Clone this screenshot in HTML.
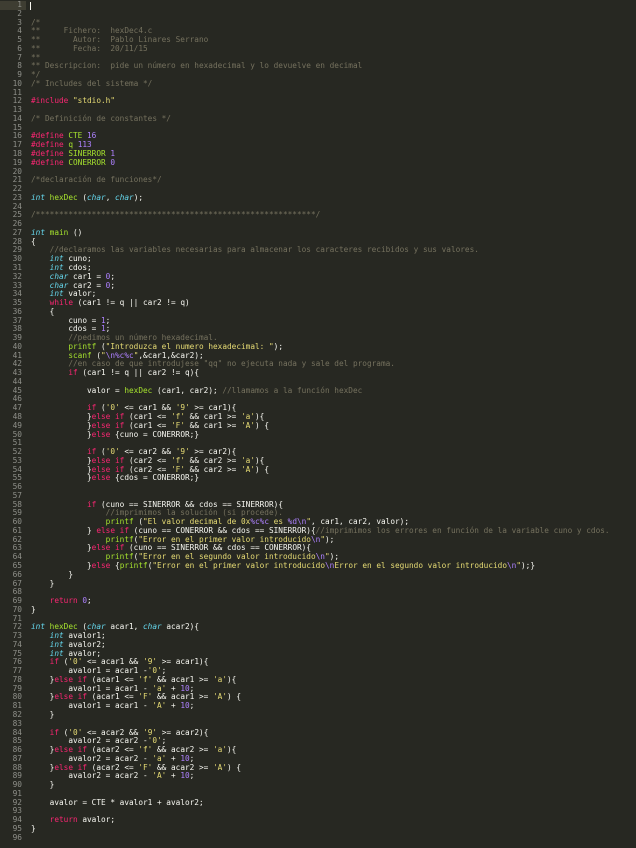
<!DOCTYPE html>
<html><head><meta charset="utf-8"><style>
html,body{margin:0;padding:0;background:#272822;width:636px;height:848px;overflow:hidden}
#g{position:absolute;left:0;top:1px;width:22px;text-align:right;font:7.8px/8.76px "DejaVu Sans Mono","Liberation Mono",monospace;color:#8f908a;white-space:pre}
#c{position:absolute;left:31px;top:1px;margin:0;font:7.75px/8.76px "DejaVu Sans Mono","Liberation Mono",monospace;color:#f8f8f2;white-space:pre}
.hl{position:absolute;left:0;top:1px;width:26px;height:9px;background:#3e3d32}
.cur{position:absolute;left:30px;top:2px;width:1px;height:8px;background:#f8f8f0}
.cm{color:#75715e}.k{color:#f92672}.t{color:#66d9ef;font-style:italic}.f{color:#a6e22e}.s{color:#e6db74}.n{color:#ae81ff}
</style></head><body>
<div class="hl"></div><div class="cur"></div>
<div id="g">1
2
3
4
5
6
7
8
9
10
11
12
13
14
15
16
17
18
19
20
21
22
23
24
25
26
27
28
29
30
31
32
33
34
35
36
37
38
39
40
41
42
43
44
45
46
47
48
49
50
51
52
53
54
55
56
57
58
59
60
61
62
63
64
65
66
67
68
69
70
71
72
73
74
75
76
77
78
79
80
81
82
83
84
85
86
87
88
89
90
91
92
93
94
95
96</div>
<pre id="c">


<span class="cm">/*
**     Fichero:  hexDec4.c
**       Autor:  Pablo Linares Serrano
**       Fecha:  20/11/15
**
** Descripcion:  pide un número en hexadecimal y lo devuelve en decimal
*/
/* Includes del sistema */</span>

<span class="k">#include</span> <span class="s">"stdio.h"</span>

<span class="cm">/* Definición de constantes */</span>

<span class="k">#define</span> <span class="f">CTE</span> <span class="n">16</span>
<span class="k">#define</span> <span class="f">q</span> <span class="n">113</span>
<span class="k">#define</span> <span class="f">SINERROR</span> <span class="n">1</span>
<span class="k">#define</span> <span class="f">CONERROR</span> <span class="n">0</span>

<span class="cm">/*declaración de funciones*/</span>

<span class="t">int</span> <span class="f">hexDec</span> (<span class="t">char</span>, <span class="t">char</span>);

<span class="cm">/************************************************************/</span>

<span class="t">int</span> <span class="f">main</span> ()
{
    <span class="cm">//declaramos las variables necesarias para almacenar los caracteres recibidos y sus valores.</span>
    <span class="t">int</span> cuno;
    <span class="t">int</span> cdos;
    <span class="t">char</span> car1 = <span class="n">0</span>;
    <span class="t">char</span> car2 = <span class="n">0</span>;
    <span class="t">int</span> valor;
    <span class="k">while</span> (car1 != q || car2 != q)
    {
        cuno = <span class="n">1</span>;
        cdos = <span class="n">1</span>;
        <span class="cm">//pedimos un número hexadecimal.</span>
        <span class="f">printf</span> (<span class="s">"Introduzca el numero hexadecimal: "</span>);
        <span class="f">scanf</span> (<span class="s">"<span class="n">\n%c%c</span>"</span>,&amp;car1,&amp;car2);
        <span class="cm">//en caso de que introdujese "qq" no ejecuta nada y sale del programa.</span>
        <span class="k">if</span> (car1 != q || car2 != q){

            valor = <span class="f">hexDec</span> (car1, car2); <span class="cm">//llamamos a la función hexDec</span>

            <span class="k">if</span> (<span class="s">'0'</span> &lt;= car1 &amp;&amp; <span class="s">'9'</span> &gt;= car1){
            }<span class="k">else if</span> (car1 &lt;= <span class="s">'f'</span> &amp;&amp; car1 &gt;= <span class="s">'a'</span>){
            }<span class="k">else if</span> (car1 &lt;= <span class="s">'F'</span> &amp;&amp; car1 &gt;= <span class="s">'A'</span>) {
            }<span class="k">else</span> {cuno = CONERROR;}

            <span class="k">if</span> (<span class="s">'0'</span> &lt;= car2 &amp;&amp; <span class="s">'9'</span> &gt;= car2){
            }<span class="k">else if</span> (car2 &lt;= <span class="s">'f'</span> &amp;&amp; car2 &gt;= <span class="s">'a'</span>){
            }<span class="k">else if</span> (car2 &lt;= <span class="s">'F'</span> &amp;&amp; car2 &gt;= <span class="s">'A'</span>) {
            }<span class="k">else</span> {cdos = CONERROR;}


            <span class="k">if</span> (cuno == SINERROR &amp;&amp; cdos == SINERROR){
                <span class="cm">//imprimimos la solución (si procede).</span>
                <span class="f">printf</span> (<span class="s">"El valor decimal de 0x<span class="n">%c%c</span> es <span class="n">%d\n</span>"</span>, car1, car2, valor);
            } <span class="k">else if</span> (cuno == CONERROR &amp;&amp; cdos == SINERROR){<span class="cm">//imprimimos los errores en función de la variable cuno y cdos.</span>
                <span class="f">printf</span>(<span class="s">"Error en el primer valor introducido<span class="n">\n</span>"</span>);
            }<span class="k">else if</span> (cuno == SINERROR &amp;&amp; cdos == CONERROR){
                <span class="f">printf</span>(<span class="s">"Error en el segundo valor introducido<span class="n">\n</span>"</span>);
            }<span class="k">else</span> {<span class="f">printf</span>(<span class="s">"Error en el primer valor introducido<span class="n">\n</span>Error en el segundo valor introducido<span class="n">\n</span>"</span>);}
        }
    }

    <span class="k">return</span> <span class="n">0</span>;
}

<span class="t">int</span> <span class="f">hexDec</span> (<span class="t">char</span> acar1, <span class="t">char</span> acar2){
    <span class="t">int</span> avalor1;
    <span class="t">int</span> avalor2;
    <span class="t">int</span> avalor;
    <span class="k">if</span> (<span class="s">'0'</span> &lt;= acar1 &amp;&amp; <span class="s">'9'</span> &gt;= acar1){
        avalor1 = acar1 -<span class="s">'0'</span>;
    }<span class="k">else if</span> (acar1 &lt;= <span class="s">'f'</span> &amp;&amp; acar1 &gt;= <span class="s">'a'</span>){
        avalor1 = acar1 - <span class="s">'a'</span> + <span class="n">10</span>;
    }<span class="k">else if</span> (acar1 &lt;= <span class="s">'F'</span> &amp;&amp; acar1 &gt;= <span class="s">'A'</span>) {
        avalor1 = acar1 - <span class="s">'A'</span> + <span class="n">10</span>;
    }

    <span class="k">if</span> (<span class="s">'0'</span> &lt;= acar2 &amp;&amp; <span class="s">'9'</span> &gt;= acar2){
        avalor2 = acar2 -<span class="s">'0'</span>;
    }<span class="k">else if</span> (acar2 &lt;= <span class="s">'f'</span> &amp;&amp; acar2 &gt;= <span class="s">'a'</span>){
        avalor2 = acar2 - <span class="s">'a'</span> + <span class="n">10</span>;
    }<span class="k">else if</span> (acar2 &lt;= <span class="s">'F'</span> &amp;&amp; acar2 &gt;= <span class="s">'A'</span>) {
        avalor2 = acar2 - <span class="s">'A'</span> + <span class="n">10</span>;
    }

    avalor = CTE * avalor1 + avalor2;

    <span class="k">return</span> avalor;
}
</pre>
</body></html>
